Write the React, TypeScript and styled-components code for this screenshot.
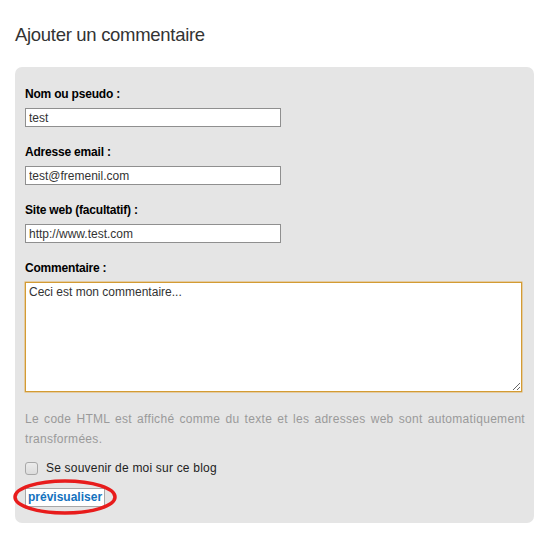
import React from "react";
import styled, { createGlobalStyle } from "styled-components";

const Global = createGlobalStyle`
  html, body { margin: 0; padding: 0; background: #ffffff; }
  body { font-family: "Liberation Sans", Arial, sans-serif; }
`;

const Page = styled.div`
  padding: 23px 13px 0 15px;
  width: 519px;
`;

const Title = styled.h2`
  margin: 0 0 20px 0;
  font-size: 18.5px;
  line-height: 24px;
  font-weight: normal;
  color: #333333;
  letter-spacing: -0.3px;
`;

const Panel = styled.form`
  background: #e5e5e5;
  border-radius: 7px;
  padding: 20px 12px 16px 10px;
  display: flex;
  flex-direction: column;
`;

const Field = styled.div`
  display: flex;
  flex-direction: column;
  margin-bottom: 18px;
`;

const Label = styled.label`
  font-size: 12px;
  line-height: 14px;
  font-weight: bold;
  color: #000;
  margin-bottom: 7px;
  letter-spacing: -0.2px;
`;

const TextInput = styled.input`
  box-sizing: border-box;
  width: 256px;
  height: 19px;
  margin: 0;
  padding: 0 3px;
  border: 1px solid #8f8f8f;
  background: #fff;
  font-family: "Liberation Sans", Arial, sans-serif;
  font-size: 12px;
  color: #333;
  outline: none;
`;

const TextArea = styled.textarea`
  box-sizing: border-box;
  width: 497px;
  height: 110px;
  margin: 0;
  padding: 2px 3px;
  border: 1px solid #d39b33;
  box-shadow: 0 0 0 0.5px #e2b260;
  background: #fff;
  font-family: "Liberation Sans", Arial, sans-serif;
  font-size: 12px;
  line-height: 15px;
  color: #333;
  outline: none;
  resize: both;
`;

const Help = styled.p`
  margin: -1px 0 12px 0;
  font-size: 12px;
  line-height: 20px;
  color: #9a9a9a;
  text-align: justify;
  letter-spacing: 0.3px;
  width: 500px;
`;

const CheckRow = styled.label`
  display: flex;
  align-items: center;
  gap: 8px;
  font-size: 12px;
  line-height: 14px;
  color: #222;
  margin-bottom: 12px;
  letter-spacing: 0.2px;
`;

const Box = styled.span`
  box-sizing: border-box;
  width: 13px;
  height: 13px;
  border: 1px solid #a8a8a8;
  border-radius: 3px;
  background: linear-gradient(#ececec, #dcdcdc);
`;

const ButtonWrap = styled.div`
  position: relative;
  align-self: flex-start;
`;

const Button = styled.button`
  box-sizing: border-box;
  height: 19px;
  padding: 0 2px;
  margin: 0;
  border: 1px solid #a8a8a8;
  background: #fff;
  font-family: "Liberation Sans", Arial, sans-serif;
  font-size: 12px;
  font-weight: bold;
  color: #1472be;
  line-height: 17px;
  cursor: pointer;
`;

const Ring = styled.svg`
  position: absolute;
  left: -12px;
  top: -8px;
  pointer-events: none;
`;

export default function App() {
  return (
    <>
      <Global />
      <Page>
        <Title>Ajouter un commentaire</Title>
        <Panel onSubmit={(e) => e.preventDefault()}>
          <Field>
            <Label>Nom ou pseudo :</Label>
            <TextInput defaultValue="test" />
          </Field>
          <Field>
            <Label>Adresse email :</Label>
            <TextInput defaultValue="test@fremenil.com" />
          </Field>
          <Field>
            <Label>Site web (facultatif) :</Label>
            <TextInput defaultValue="http://www.test.com" />
          </Field>
          <Field>
            <Label>Commentaire :</Label>
            <TextArea defaultValue="Ceci est mon commentaire..." />
          </Field>
          <Help>
            Le code HTML est affiché comme du texte et les adresses web sont automatiquement
            transformées.
          </Help>
          <CheckRow>
            <Box />
            Se souvenir de moi sur ce blog
          </CheckRow>
          <ButtonWrap>
            <Button type="button">prévisualiser</Button>
            <Ring width="106" height="36" viewBox="0 0 106 36">
              <ellipse cx="52" cy="18" rx="50" ry="16" fill="none" stroke="#e81c1c" strokeWidth="3.5" />
            </Ring>
          </ButtonWrap>
        </Panel>
      </Page>
    </>
  );
}
